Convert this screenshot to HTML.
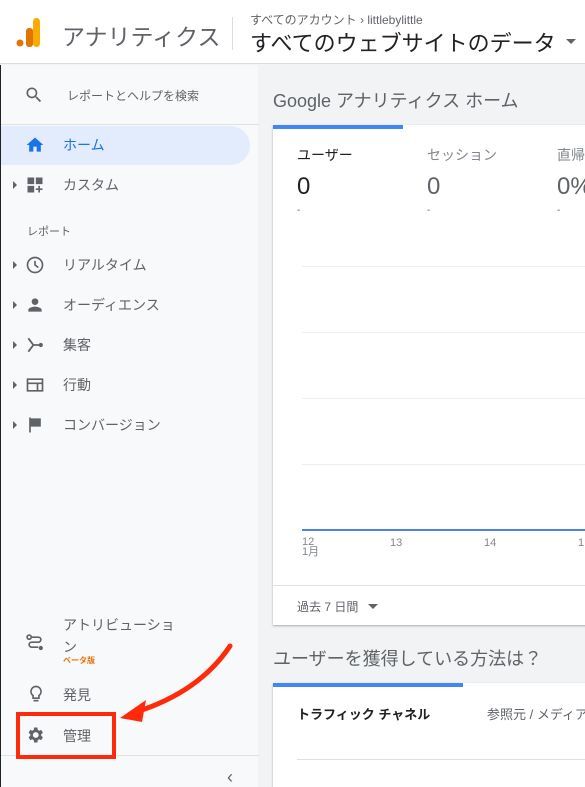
<!DOCTYPE html>
<html><head><meta charset="utf-8"><style>
*{margin:0;padding:0;box-sizing:border-box}
html,body{width:585px;height:787px;overflow:hidden}
body{position:relative;background:#f1f3f4;font-family:"Liberation Sans","Noto Sans CJK JP",sans-serif;color:#5f6368}
.abs{position:absolute;white-space:nowrap}
#top{position:absolute;left:0;top:0;width:585px;height:64px;background:#fff;border-bottom:1px solid #dadce0}
#side{position:absolute;left:0;top:65px;width:258px;bottom:0;background:#f8f9fa;border-left:1px solid #222}
.item{position:absolute;left:0;width:258px;height:40px}
.item .t{position:absolute;left:62px;top:10px;font-size:14px;color:#5f6368}
.item svg{position:absolute;left:24px;top:10px}
.tri{position:absolute;left:12px;top:16px;width:0;height:0;border-left:4px solid #5f6368;border-top:4px solid transparent;border-bottom:4px solid transparent}
.card{position:absolute;background:#fff;box-shadow:0 1px 2px rgba(0,0,0,.3)}
</style></head><body>
<div id="top">
 <svg class="abs" style="left:16px;top:18px" width="24" height="30"><circle cx="4" cy="25" r="3.5" fill="#e37400"/><rect x="10" y="10" width="7" height="19" rx="3" fill="#e37400"/><rect x="17" y="0" width="7" height="29" rx="3.5" fill="#f9ab00"/></svg>
 <div class="abs" style="left:62px;top:18px;font-size:23px;color:#5f6368">アナリティクス</div>
 <div class="abs" style="left:232px;top:17px;width:1px;height:33px;background:#dadce0"></div>
 <div class="abs" style="left:250px;top:11px;font-size:12px;color:#5f6368">すべてのアカウント › littlebylittle</div>
 <div class="abs" style="left:250px;top:26px;font-size:22px;color:#202124">すべてのウェブサイトのデータ</div>
 <div class="abs" style="left:566px;top:39px;border-top:5px solid #5f6368;border-left:5px solid transparent;border-right:5px solid transparent"></div>
</div>
<div id="side">
 <svg class="abs" style="left:23px;top:20px" width="20" height="20" viewBox="0 0 24 24"><path fill="#5f6368" d="M15.5 14h-.8l-.3-.3A6.5 6.5 0 1 0 9.5 16a6.5 6.5 0 0 0 4.2-1.6l.3.3v.8l5 5 1.5-1.5-5-5zm-6 0C7 14 5 12 5 9.5S7 5 9.5 5 14 7 14 9.5 12 14 9.5 14z"/></svg>
 <div class="abs" style="left:66px;top:22px;font-size:12px">レポートとヘルプを検索</div>
 <div class="abs" style="left:0;top:59px;width:258px;height:1px;background:#e0e0e0"></div>
 <div class="abs" style="left:0;top:61px;width:249px;height:39px;background:#e2ecfc;border-radius:0 20px 20px 0"></div>
 <div class="item" style="top:60px"><svg width="20" height="20" viewBox="0 0 24 24"><path fill="#1a73e8" d="M10 20v-6h4v6h5v-8h3L12 3 2 12h3v8z"/></svg><span class="t" style="color:#1a73e8">ホーム</span></div>
 <div class="item" style="top:100px"><div class="tri"></div><svg width="20" height="20" viewBox="0 0 24 24"><path fill="#5f6368" d="M3 3h8v8H3zM13 3h8v8h-8zM3 13h8v8H3zM16 13h2v3h3v2h-3v3h-2v-3h-3v-2h3z"/></svg><span class="t">カスタム</span></div>
 <div class="abs" style="left:26px;top:158px;font-size:11px">レポート</div>
 <div class="item" style="top:180px"><div class="tri"></div><svg width="20" height="20" viewBox="0 0 24 24"><circle cx="12" cy="12" r="9" fill="none" stroke="#5f6368" stroke-width="2"/><path d="M12 7v5l4 3" fill="none" stroke="#5f6368" stroke-width="2"/></svg><span class="t">リアルタイム</span></div>
 <div class="item" style="top:220px"><div class="tri"></div><svg width="20" height="20" viewBox="0 0 24 24"><path fill="#5f6368" d="M12 12a4 4 0 1 0 0-8 4 4 0 0 0 0 8zm0 2c-2.7 0-8 1.3-8 4v2h16v-2c0-2.7-5.3-4-8-4z"/></svg><span class="t">オーディエンス</span></div>
 <div class="item" style="top:260px"><div class="tri"></div><svg width="20" height="20" viewBox="0 0 24 24"><path fill="none" stroke="#5f6368" stroke-width="2.2" d="M4 4l6 8-6 8M10 12h8"/><circle cx="19" cy="12" r="2.5" fill="#5f6368"/></svg><span class="t">集客</span></div>
 <div class="item" style="top:300px"><div class="tri"></div><svg width="20" height="20" viewBox="0 0 24 24"><path fill="none" stroke="#5f6368" stroke-width="2" d="M3 5h18v14H3zM3 10h18M15 10v9"/></svg><span class="t">行動</span></div>
 <div class="item" style="top:340px"><div class="tri"></div><svg width="20" height="20" viewBox="0 0 24 24"><path fill="#5f6368" d="M5 3h2v18H5zM7 4h12v10H7z"/></svg><span class="t">コンバージョン</span></div>
 <svg class="abs" style="left:24px;top:568px" width="20" height="20" viewBox="0 0 24 24"><circle cx="5" cy="5" r="2.5" fill="none" stroke="#5f6368" stroke-width="2"/><path d="M8 5h8a3 3 0 0 1 0 6H8a3 3 0 0 0 0 6h8" fill="none" stroke="#5f6368" stroke-width="2"/><circle cx="19" cy="18" r="2.5" fill="#5f6368"/></svg>
 <div class="abs" style="left:62px;top:550px;font-size:14px">アトリビューショ</div>
 <div class="abs" style="left:62px;top:572px;font-size:14px">ン</div>
 <div class="abs" style="left:62px;top:590px;font-size:8px;color:#e8710a;font-weight:bold">ベータ版</div>
 <svg class="abs" style="left:25px;top:619px" width="20" height="20" viewBox="0 0 24 24"><path fill="none" stroke="#5f6368" stroke-width="2" d="M12 3a6 6 0 0 0-3.5 10.9V17h7v-3.1A6 6 0 0 0 12 3zM9 20h6"/></svg>
 <div class="abs" style="left:62px;top:620px;font-size:14px">発見</div>
 <svg class="abs" style="left:24px;top:660px" width="20" height="20" viewBox="0 0 24 24"><path fill="#5f6368" d="M19.4 13a7.5 7.5 0 0 0 0-2l2.1-1.6-2-3.5-2.5 1a7 7 0 0 0-1.7-1L14.9 3h-4l-.4 2.9a7 7 0 0 0-1.7 1l-2.5-1-2 3.5L6.4 11a7.5 7.5 0 0 0 0 2l-2.1 1.6 2 3.5 2.5-1a7 7 0 0 0 1.7 1l.4 2.9h4l.4-2.9a7 7 0 0 0 1.7-1l2.5 1 2-3.5zM12.9 15.5a3.5 3.5 0 1 1 0-7 3.5 3.5 0 0 1 0 7z"/></svg>
 <div class="abs" style="left:62px;top:661px;font-size:14px">管理</div>
 <div class="abs" style="left:0;top:690px;width:258px;height:1px;background:#e0e0e0"></div>
 <div class="abs" style="left:226px;top:702px;font-size:18px;color:#5f6368">‹</div>
</div>
<div class="abs" style="left:273px;top:87px;font-size:18px;color:#5f6368">Google アナリティクス ホーム</div>
<div class="card" style="left:273px;top:125px;width:320px;height:500px">
 <div class="abs" style="left:0;top:0;width:130px;height:4px;background:#4285f4"></div>
 <div class="abs" style="left:24px;top:20px;font-size:14px;color:#202124">ユーザー</div>
 <div class="abs" style="left:154px;top:20px;font-size:14px;color:#80868b">セッション</div>
 <div class="abs" style="left:284px;top:20px;font-size:14px;color:#80868b">直帰</div>
 <div class="abs" style="left:24px;top:48px;font-size:24px;color:#202124">0</div>
 <div class="abs" style="left:154px;top:48px;font-size:24px;color:#5f6368">0</div>
 <div class="abs" style="left:284px;top:48px;font-size:24px;color:#5f6368">0%</div>
 <div class="abs" style="left:24px;top:80px;font-size:10px">-</div>
 <div class="abs" style="left:154px;top:80px;font-size:10px">-</div>
 <div class="abs" style="left:284px;top:80px;font-size:10px">-</div>
 <div class="abs" style="left:29px;top:141px;width:300px;height:1px;background:#eee"></div>
 <div class="abs" style="left:29px;top:207px;width:300px;height:1px;background:#eee"></div>
 <div class="abs" style="left:29px;top:273px;width:300px;height:1px;background:#eee"></div>
 <div class="abs" style="left:29px;top:339px;width:300px;height:1px;background:#eee"></div>
 <div class="abs" style="left:29px;top:404px;width:300px;height:2px;background:#4d7fe8"></div>
 <div class="abs" style="left:29px;top:412px;font-size:11px;color:#80868b;line-height:10px">12<br>1月</div>
 <div class="abs" style="left:117px;top:412px;font-size:11px;color:#80868b">13</div>
 <div class="abs" style="left:211px;top:412px;font-size:11px;color:#80868b">14</div>
 <div class="abs" style="left:305px;top:412px;font-size:11px;color:#80868b">1</div>
 <div class="abs" style="left:0;top:460px;width:320px;height:1px;background:#e0e0e0"></div>
 <div class="abs" style="left:24px;top:473px;font-size:12px">過去 7 日間</div>
 <div class="abs" style="left:95px;top:479px;border-top:5px solid #5f6368;border-left:5px solid transparent;border-right:5px solid transparent"></div>
</div>
<div class="abs" style="left:273px;top:645px;font-size:18px;color:#5f6368">ユーザーを獲得している方法は？</div>
<div class="card" style="left:273px;top:683px;width:320px;height:120px">
 <div class="abs" style="left:0;top:0;width:190px;height:4px;background:#4285f4"></div>
 <div class="abs" style="left:24px;top:21px;font-size:13px;font-weight:bold;color:#202124">トラフィック チャネル</div>
 <div class="abs" style="left:214px;top:21px;font-size:13px;color:#5f6368">参照元 / メディア</div>
 <div class="abs" style="left:24px;top:76px;width:300px;height:1px;background:#e0e0e0"></div>
</div>
<div class="abs" style="left:16px;top:712px;width:100px;height:47px;border:4px solid #ff2a0a"></div>
<svg class="abs" style="left:110px;top:640px" width="130" height="90"><path d="M120 6 C100 36 70 58 26 72" fill="none" stroke="#ff2a0a" stroke-width="5" stroke-linecap="round"/><path d="M10 78 L36 60 L32 82 Z" fill="#ff2a0a"/></svg>
</body></html>
